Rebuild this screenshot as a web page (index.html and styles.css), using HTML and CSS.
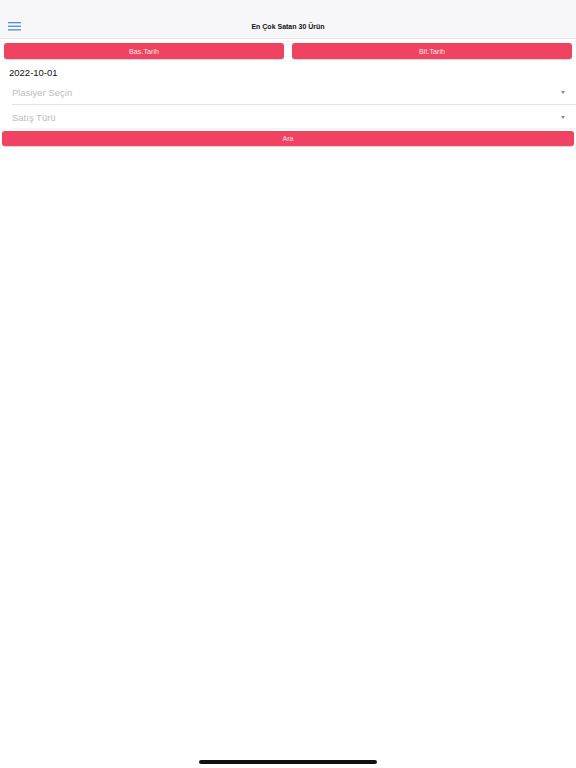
FILE: index.html
```html
<!DOCTYPE html>
<html lang="tr">
<head>
<meta charset="utf-8">
<title>En Çok Satan 30 Ürün</title>
<link rel="stylesheet" href="styles.css">
</head>
<body>
<div class="top">
  <div class="status"><span class="time">09:41</span><span class="batt">100%</span></div>
  <div class="nav">
    <svg class="menu" width="13" height="9" viewBox="0 0 13 9">
      <rect x="0" y="0" width="13" height="1.3" fill="#4a8fd8"/>
      <rect x="0" y="3.6" width="13" height="1.3" fill="#4a8fd8"/>
      <rect x="0" y="7.2" width="13" height="1.3" fill="#4a8fd8"/>
    </svg>
    <div class="title">En Çok Satan 30 Ürün</div>
  </div>
</div>
<div class="dates">
  <div class="btn">Bas.Tarih</div>
  <div class="btn">Bit.Tarih</div>
</div>
<div class="date">2022-10-01</div>
<div class="select first"><span>Plasiyer Seçin</span><span class="arrow"></span></div>
<div class="select second"><span>Satış Türü</span><span class="arrow"></span></div>
<div class="btn search">Ara</div>
<div class="home"></div>
</body>
</html>
```
FILE: styles.css
```css
html, body {
  margin: 0;
  padding: 0;
  background: #ffffff;
  font-family: "Liberation Sans", Arial, sans-serif;
  width: 576px;
  height: 768px;
  overflow: hidden;
}
.top {
  background: #f7f6f8;
  border-bottom: 1px solid #dfe8dd;
}
.status {
  height: 14px;
  display: flex;
  justify-content: space-between;
  align-items: center;
  padding: 0 16px;
  color: #fafafa;
  font-size: 7px;
}
.nav {
  height: 24px;
  display: flex;
  align-items: center;
  justify-content: center;
  position: relative;
}
.menu {
  position: absolute;
  left: 8px;
  top: 8px;
}
.title {
  font-size: 7px;
  font-weight: bold;
  color: #111;
}
.dates {
  display: flex;
  gap: 8px;
  padding: 4px 4px 0 4px;
}
.btn {
  flex: 1;
  height: 16px;
  background: #ef4361;
  border-radius: 3px;
  box-shadow: 0 1px 1px rgba(0,0,0,0.18);
  color: #fde8ec;
  font-size: 7.2px;
  display: flex;
  align-items: center;
  justify-content: center;
}
.date {
  margin: 7px 0 0 9px;
  font-size: 9.5px;
  line-height: 13px;
  color: #111;
}
.select {
  margin-left: 12px;
  border-bottom: 1px solid #e4e4e4;
  display: flex;
  align-items: center;
  justify-content: space-between;
  padding-right: 11px;
  font-size: 9.5px;
  color: #bdbdbd;
}
.select.first {
  height: 26px;
  padding-top: 1px;
  box-sizing: border-box;
}
.select.second {
  height: 24px;
  padding-top: 1px;
  box-sizing: border-box;
  border-bottom-color: #f2f2f2;
}
.arrow {
  width: 0;
  height: 0;
  border-left: 2.5px solid transparent;
  border-right: 2.5px solid transparent;
  border-top: 3px solid #8a8a8a;
}
.search {
  margin: 2px 2px 0 2px;
  height: 15px;
  color: #fde8ec;
  font-size: 7px;
}
.home {
  position: absolute;
  left: 199px;
  top: 760px;
  width: 178px;
  height: 3.5px;
  border-radius: 2px;
  background: #111;
}
```
